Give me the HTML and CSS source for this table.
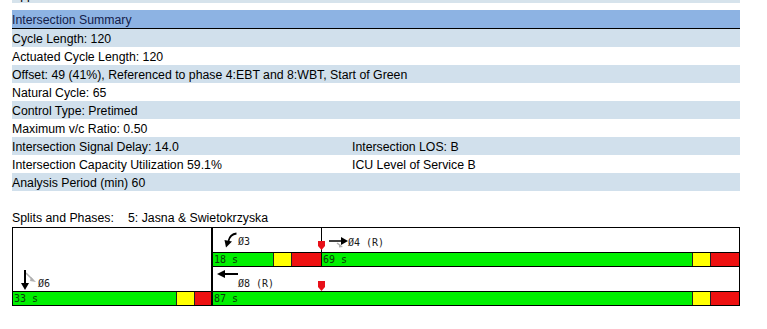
FILE: index.html
```html
<!DOCTYPE html>
<html>
<head>
<meta charset="utf-8">
<title>Intersection Summary</title>
<link rel="stylesheet" href="styles.css">
</head>
<body>
<div class="sheet">
  <div class="clip"><span>Approach</span></div>
  <div class="summary">
    <div class="head">Intersection Summary</div>
    <div class="row alt"><span>Cycle Length: 120</span><span></span></div>
    <div class="row"><span>Actuated Cycle Length: 120</span><span></span></div>
    <div class="row alt"><span class="wide">Offset: 49 (41%), Referenced to phase 4:EBT and 8:WBT, Start of Green</span></div>
    <div class="row"><span>Natural Cycle: 65</span><span></span></div>
    <div class="row alt"><span>Control Type: Pretimed</span><span></span></div>
    <div class="row"><span>Maximum v/c Ratio: 0.50</span><span></span></div>
    <div class="row alt"><span>Intersection Signal Delay: 14.0</span><span>Intersection LOS: B</span></div>
    <div class="row"><span>Intersection Capacity Utilization 59.1%</span><span>ICU Level of Service B</span></div>
    <div class="row alt"><span>Analysis Period (min) 60</span><span></span></div>
  </div>

  <div class="splits-title"><span class="lbl">Splits and Phases:</span><span>5: Jasna &amp; Swietokrzyska</span></div>

  <div class="diagram">
    <div class="col-left">
      <div class="label l6">
        <svg class="ar6" width="18" height="22" viewBox="0 0 18 22">
          <line x1="6" y1="4" x2="13" y2="11" stroke="#b0b0b0" stroke-width="1.5"/>
          <polygon points="11,8 16,13 10,12" fill="#b0b0b0"/>
          <line x1="5" y1="1" x2="5" y2="15" stroke="#000" stroke-width="2"/>
          <polygon points="1,14 9,14 5,21" fill="#000"/>
        </svg>
        <span class="ph">Ø6</span>
      </div>
      <div class="bar">
        <div class="g">33 s</div><div class="y"></div><div class="r r17"></div>
      </div>
    </div>
    <div class="divider"></div>
    <div class="col-right">
      <div class="top">
        <div class="phase p3">
          <div class="label l3">
            <svg width="16" height="16" viewBox="0 0 16 16">
              <path d="M14.5,1.5 C10,2 7.5,4.5 6.5,9" fill="none" stroke="#000" stroke-width="1.8"/>
              <polygon points="2.5,8 10,9.5 4,15.5" fill="#000"/>
            </svg>
            <span class="ph">Ø3</span>
          </div>
          <div class="bar">
            <div class="g">18 s</div><div class="y"></div><div class="r"></div>
          </div>
        </div>
        <div class="phase p4">
          <div class="label l4">
            <svg class="mark m4" width="7" height="9" viewBox="0 0 7 9"><polygon points="0,0 7,0 7,5 3.5,9 0,5" fill="#e8101a"/></svg>
            <svg width="19" height="12" viewBox="0 0 19 12">
              <line x1="8" y1="7" x2="12" y2="10" stroke="#b0b0b0" stroke-width="1.5"/>
              <polygon points="10,8 14,11 10,11.5" fill="#b0b0b0"/>
              <line x1="0" y1="5" x2="13" y2="5" stroke="#000" stroke-width="1.5"/>
              <polygon points="12,1 19,5 12,9" fill="#000"/>
            </svg>
            <span class="ph">Ø4 (R)</span>
          </div>
          <div class="bar">
            <div class="g">69 s</div><div class="y"></div><div class="r"></div>
          </div>
        </div>
      </div>
      <div class="bottom">
        <div class="label l8">
          <svg width="21" height="23" viewBox="0 0 21 23">
            <line x1="6" y1="7" x2="21" y2="7" stroke="#000" stroke-width="2"/>
            <polygon points="0,7 8,3 8,11" fill="#000"/>
          </svg>
          <span class="ph">Ø8 (R)</span>
          <svg class="mark m8" width="7" height="10" viewBox="0 0 7 10"><polygon points="0,0 7,0 7,6 3.5,10 0,6" fill="#e8101a"/></svg>
        </div>
        <div class="bar">
          <div class="g">87 s</div><div class="y"></div><div class="r"></div>
        </div>
      </div>
    </div>
  </div>
</div>
</body>
</html>
```

FILE: styles.css
```css
html, body {
  margin: 0;
  padding: 0;
  background: #ffffff;
}

body {
  font-family: "Liberation Sans", Arial, sans-serif;
  font-size: 12.3px;
  color: #000;
}

.sheet {
  width: 728px;
  margin-left: 12px;
}

.clip {
  height: 3px;
  overflow: hidden;
  background: #d6e3ec;
}

.clip span {
  display: block;
  line-height: 18px;
  margin-top: -14px;
}

.summary {
  margin-top: 7px;
}

.head {
  height: 16px;
  padding-top: 2px;
  line-height: 16px;
  background: #8db3e3;
  border-bottom: 1px solid #000;
  color: #14204a;
}

.row {
  display: grid;
  grid-template-columns: 340px 1fr;
  height: 16px;
  padding-top: 2px;
  line-height: 16px;
  white-space: nowrap;
}

.row .wide {
  grid-column: 1 / 3;
}

.row.alt {
  background: #d1e0ec;
}

.splits-title {
  margin-top: 18px;
  height: 17px;
  padding-top: 1px;
  line-height: 17px;
  white-space: nowrap;
}

.splits-title .lbl {
  display: inline-block;
  width: 116px;
}

/* Diagram */
.diagram {
  display: flex;
  height: 78px;
  border: 1px solid #000;
  border-bottom: none;
  font-family: "DejaVu Sans Mono", "Liberation Mono", monospace;
  font-size: 10px;
}

.col-left {
  width: 198px;
  display: flex;
  flex-direction: column;
  justify-content: flex-end;
}

.divider {
  width: 2px;
  background: #000;
}

.col-right {
  flex: 1;
  display: flex;
  flex-direction: column;
}

.top {
  display: flex;
}

.phase {
  display: flex;
  flex-direction: column;
}

.p3 {
  width: 108px;
}

.p4 {
  flex: 1;
  border-left: 1px solid #000;
}

.label {
  position: relative;
  height: 24px;
  display: flex;
  align-items: flex-end;
  color: #1a1a1a;
}

.label svg {
  display: block;
}

.ph {
  line-height: 12px;
  white-space: nowrap;
}

.l3 {
  padding-left: 9px;
  padding-bottom: 4px;
  box-sizing: border-box;
}

.l4 {
  padding-left: 7px;
  padding-bottom: 3px;
  box-sizing: border-box;
}

.l4 svg:not(.mark) {
  margin-bottom: 1px;
}

.l8 {
  padding-left: 4px;
  align-items: flex-start;
}

.l8 .ph {
  align-self: flex-end;
  margin-bottom: 1px;
}

.l6 {
  padding-left: 7px;
}

.l6 .ph {
  margin-bottom: 1px;
}

.mark {
  position: absolute;
}

.m4 {
  left: -4px;
  top: 13px;
}

.m8 {
  left: 105px;
  top: 14px;
}

.bar {
  display: flex;
  height: 13px;
  border-top: 1px solid #000;
  border-bottom: 1px solid #000;
  line-height: 13px;
}

.bar .g {
  flex: 1;
  background: #00f000;
  color: #0b3a0b;
  padding-left: 1px;
  white-space: nowrap;
  overflow: hidden;
}

.bar .y {
  width: 17px;
  background: #ffff00;
  border-left: 1px solid #222;
}

.bar .r {
  width: 28px;
  background: #ee1111;
  border-left: 1px solid #222;
}

.bar .r.r17 {
  width: 16px;
}

.p3 .bar .r {
  width: 29px;
}
```
